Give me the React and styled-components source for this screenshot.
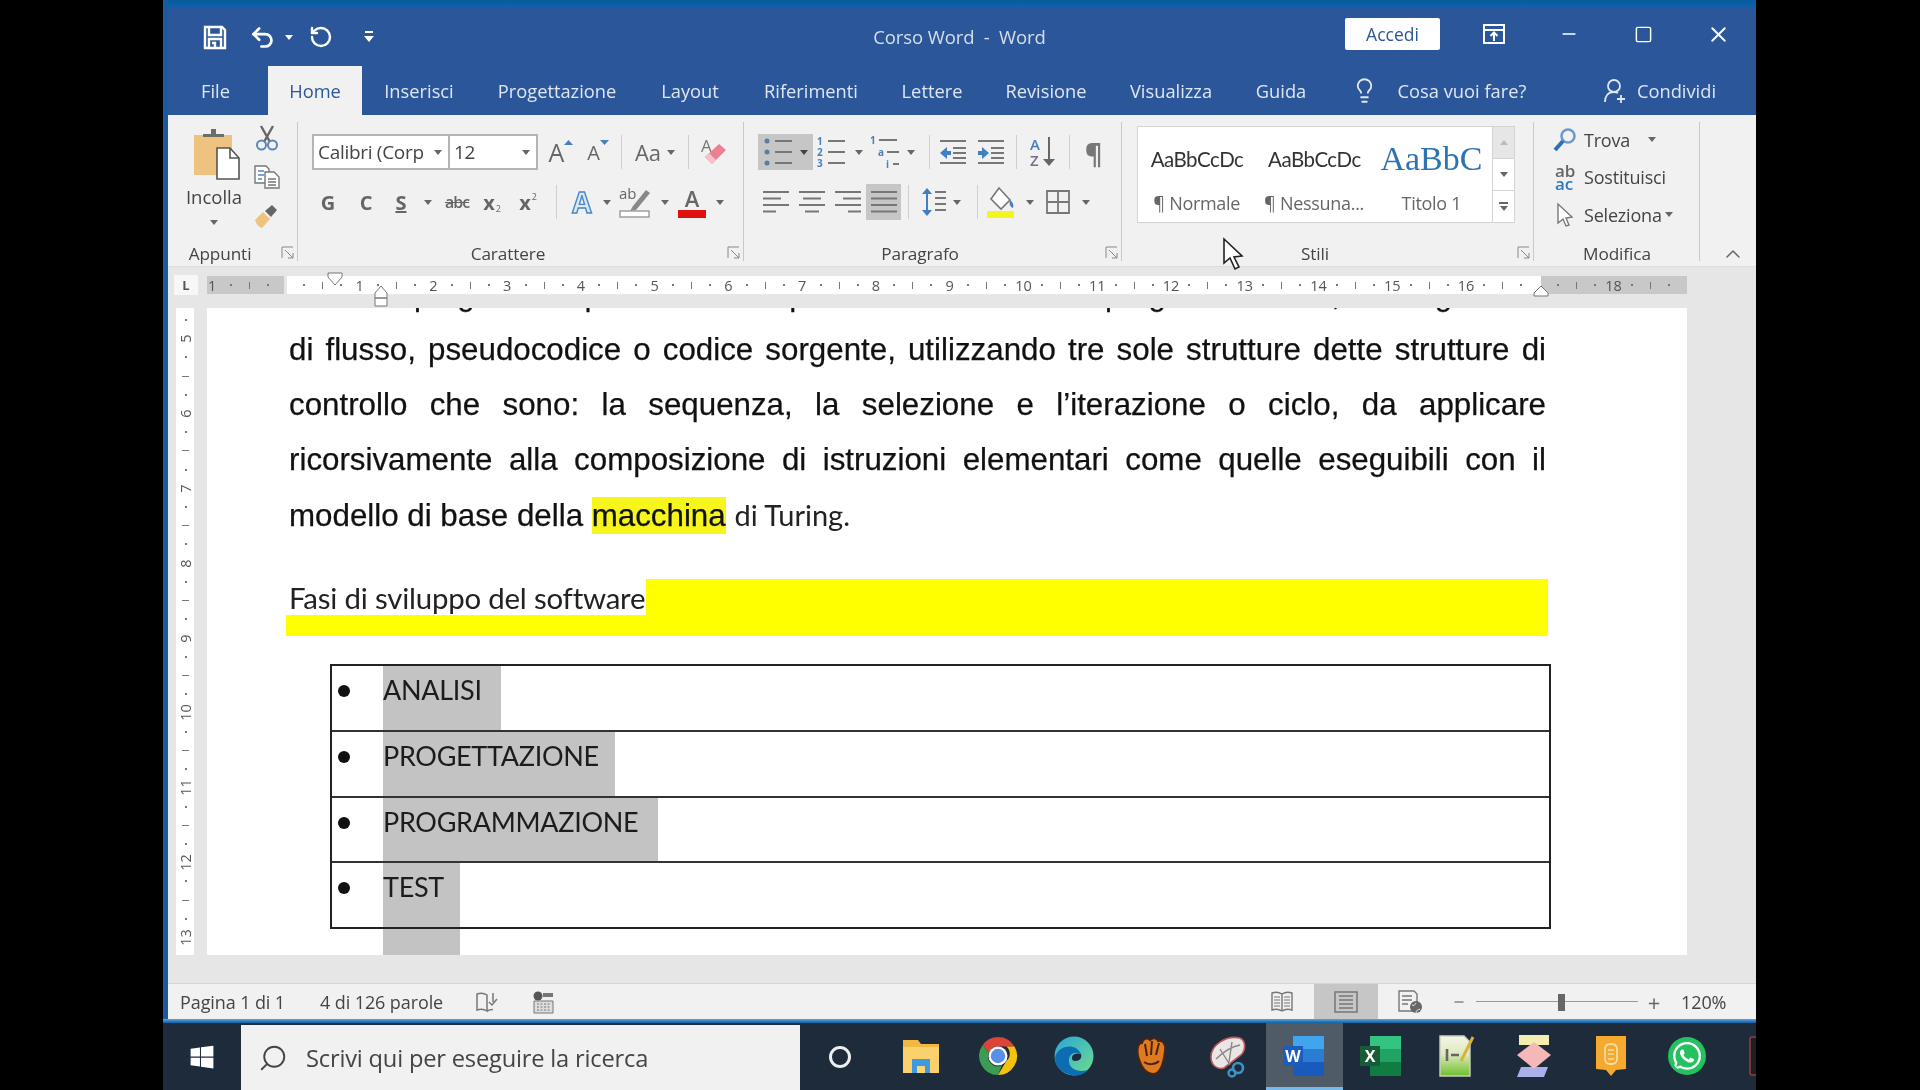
import React from 'react';
import styled, { createGlobalStyle } from 'styled-components';
import { Undo2, RotateCcw, Lightbulb, Search, Minus, Square, X, ChevronUp } from 'lucide-react';
import { FaWhatsapp, FaWindows } from 'react-icons/fa';

const ui = `"Open Sans", "Noto Sans", sans-serif`;
const calibri = `Lato, "Open Sans", sans-serif`;

const Global = createGlobalStyle`
  html, body { margin: 0; padding: 0; background: #000; }
  * { box-sizing: border-box; }
`;

const Desktop = styled.div`
  width: 1920px;
  height: 1090px;
  background: #000;
  padding-left: 163px;
  overflow: hidden;
  font-family: ${ui};
  filter: blur(0.6px);
`;

const Win = styled.div`
  width: 1593px;
  height: 1090px;
  display: flex;
  flex-direction: column;
  overflow: hidden;
`;

const Frame = styled.div`
  flex: 1;
  display: flex;
  flex-direction: column;
  border-left: 5px solid #1b5a9e;
  min-height: 0;
`;

const TopStrip = styled.div`
  height: 8px;
  background: linear-gradient(#0b5a9c, #0d62ad);
`;

const TitleBar = styled.div`
  height: 58px;
  background: #2b579a;
  display: grid;
  grid-template-columns: 1fr auto 1fr;
  align-items: center;
  color: #fff;
`;

const Qat = styled.div`
  display: flex;
  align-items: center;
  padding-left: 35px;
`;

const TitleText = styled.div`
  font-size: 18.5px;
  letter-spacing: -0.1px;
  color: #d5deea;
  white-space: pre;
  margin-left: -5px;
  margin-top: -2px;
`;

const WinControls = styled.div`
  display: flex;
  align-items: center;
  justify-content: flex-end;
  margin-top: -6px;
`;

const Accedi = styled.div`
  width: 95px;
  height: 32px;
  background: #fff;
  border-radius: 2px;
  color: #2b579a;
  font-size: 17.5px;
  display: flex;
  align-items: center;
  justify-content: center;
  margin-right: 16px;
`;

const Slot = styled.div`
  width: ${({ $w }) => $w}px;
  flex: none;
  height: 100%;
  display: flex;
  align-items: center;
  justify-content: center;
  color: ${({ $c }) => $c || '#666'};
  font-size: ${({ $s }) => $s || 18}px;
  font-weight: ${({ $b }) => ($b ? 700 : 400)};
  background: ${({ $on }) => ($on ? '#c6c6c6' : 'none')};
`;

const CtrlSlot = styled.div`
  width: 75px;
  height: 40px;
  display: flex;
  align-items: center;
  justify-content: center;
`;

const TabBar = styled.div`
  height: 49px;
  background: #2b579a;
  display: flex;
  align-items: stretch;
`;

const Tab = styled.div`
  width: ${({ $w }) => $w}px;
  flex: none;
  display: flex;
  align-items: center;
  justify-content: center;
  font-size: 18.3px;
  padding-right: ${({ $pr }) => $pr || 0}px;
  white-space: nowrap;
  color: ${({ $active }) => ($active ? '#2b579a' : '#dfe6f0')};
  background: ${({ $active }) => ($active ? '#f1f1f1' : 'none')};
`;

const Share = styled.div`
  margin-left: auto;
  display: flex;
  align-items: center;
  gap: 10px;
  color: #dfe6f0;
  font-size: 18.3px;
  padding-right: 40px;
`;

const Ribbon = styled.div`
  height: 152px;
  background: #f1f1f1;
  display: flex;
  position: relative;
  border-bottom: 1px solid #dcdcdc;
`;

const Group = styled.div`
  width: ${({ $w }) => $w}px;
  flex: none;
  display: flex;
  flex-direction: column;
  position: relative;
  &::after {
    content: '';
    position: absolute;
    right: 0;
    top: 7px;
    bottom: 5px;
    width: 1px;
    background: #c9c9c9;
  }
`;

const GroupBody = styled.div`
  height: 124px;
  display: flex;
  flex-direction: ${({ $col }) => ($col ? 'column' : 'row')};
  padding: ${({ $pad }) => $pad || '0'};
`;

const GroupFoot = styled.div`
  height: 28px;
  display: flex;
  align-items: center;
  padding: 2px 0 0 0;
`;

const GroupLabel = styled.div`
  flex: 1;
  text-align: center;
  font-size: 17.2px;
  letter-spacing: -0.1px;
  color: #444;
`;

const Launcher = styled.svg`
  width: 14px;
  height: 14px;
  margin: 0 3px 0 9px;
  flex: none;
`;

const PasteCol = styled.div`
  width: 82px;
  display: flex;
  flex-direction: column;
  align-items: center;
  padding-top: 13px;
`;

const PasteArt = styled.div`
  margin-left: 5px;
  height: 52px;
`;

const PasteLabel = styled.div`
  font-size: 18.5px;
  color: #444;
  margin: 5px 0 11px;
  line-height: 24px;
`;

const ClipCol = styled.div`
  width: 24px;
  display: flex;
  flex-direction: column;
  align-items: center;
  gap: 14px;
  padding-top: 10px;
`;

const ToolRow = styled.div`
  height: 36px;
  display: flex;
  align-items: center;
  margin-bottom: 14px;
`;

const Combo = styled.div`
  width: ${({ $w }) => $w}px;
  height: 36px;
  flex: none;
  background: #fff;
  border: 2px solid #b4b4b4;
  margin-left: ${({ $join }) => ($join ? '-2px' : '0')};
  display: flex;
  align-items: center;
  justify-content: space-between;
  padding: 0 6px 0 4px;
  font-size: 19px;
  letter-spacing: -0.3px;
  color: #444;
  white-space: nowrap;
`;

const Spacer = styled.div`
  width: ${({ $w }) => $w}px;
  flex: none;
`;

const VSep = styled.div`
  width: 1px;
  height: 34px;
  flex: none;
  background: #d0d0d0;
`;

const Drop = styled.span`
  display: inline-block;
  flex: none;
  width: 0;
  height: 0;
  border-left: 4px solid transparent;
  border-right: 4px solid transparent;
  border-top: 5px solid ${({ $c }) => $c || '#666'};
`;

const Under = styled.span`
  text-decoration: underline;
`;

const Strike = styled.span`
  text-decoration: line-through;
  letter-spacing: -1px;
  font-weight: 600;
`;

const Tiny = styled.span`
  font-size: 9px;
  font-weight: 400;
  align-self: ${({ $top }) => ($top ? 'flex-start' : 'flex-end')};
  margin: ${({ $top }) => ($top ? '6px 0 0 1px' : '0 0 5px 1px')};
`;

const EffectA = styled.span`
  font-size: 28px;
  line-height: 36px;
  font-weight: 700;
  color: #dbe9f7;
  -webkit-text-stroke: 1.4px #4a86c8;
`;

const ColorA = styled.div`
  height: 32px;
  width: 28px;
  display: flex;
  flex-direction: column;
  align-items: center;
  justify-content: flex-end;
  font-size: 22px;
  font-weight: 600;
  line-height: 24px;
  color: #666;
  &::after {
    content: '';
    width: 28px;
    height: 8px;
    flex: none;
    background: #e01010;
  }
`;

const Gallery = styled.div`
  width: 378px;
  height: 97px;
  margin: 11px 0 0 15px;
  background: #fff;
  border: 1px solid #d4d4d4;
  display: flex;
`;

const StyleItem = styled.div`
  width: 118px;
  display: flex;
  flex-direction: column;
  align-items: center;
`;

const StylePreview = styled.div`
  height: 63px;
  width: ${({ $title }) => ($title ? 110 : 96)}px;
  margin-left: ${({ $title }) => ($title ? 0 : 4)}px;
  overflow: hidden;
  display: flex;
  align-items: center;
  justify-content: ${({ $title }) => ($title ? 'center' : 'flex-start')};
  white-space: nowrap;
  font-family: ${({ $title }) => ($title ? `"Liberation Serif", serif` : calibri)};
  font-size: ${({ $title }) => ($title ? 34 : 20.5)}px;
  color: ${({ $title }) => ($title ? '#2e74b5' : '#333')};
  letter-spacing: ${({ $title }) => ($title ? '0' : '-0.5px')};
`;

const StyleName = styled.div`
  font-size: 18px;
  letter-spacing: -0.3px;
  color: #666;
  white-space: nowrap;
  line-height: 26px;
`;

const GalleryScroll = styled.div`
  width: 22px;
  margin-left: 2px;
  display: flex;
  flex-direction: column;
  border-left: 1px solid #d4d4d4;
`;

const ScrollBtn = styled.div`
  flex: 1;
  display: flex;
  align-items: center;
  justify-content: center;
  flex-direction: column;
  gap: 2px;
  background: ${({ $off }) => ($off ? '#e6e6e6' : '#fff')};
  border-bottom: 1px solid #d4d4d4;
  &:last-child { border-bottom: none; }
`;

const MoreBar = styled.i`
  width: 9px;
  height: 2px;
  background: #666;
  display: block;
`;

const EditRow = styled.div`
  height: 37.5px;
  display: flex;
  align-items: center;
  font-size: 18px;
  letter-spacing: -0.2px;
  color: #444;
  gap: 7px;
  white-space: nowrap;
`;

const EditIcon = styled.div`
  width: 24px;
  display: flex;
  justify-content: center;
  flex: none;
`;

const AbAc = styled.div`
  font-size: 17px;
  line-height: 13px;
  font-weight: 600;
  color: #666;
  span { color: #2f79c2; display: block; }
`;

const Collapse = styled.div`
  flex: 1;
  display: flex;
  align-items: flex-end;
  justify-content: center;
  padding: 0 0 0 10px;
  color: #666;
`;

const MouseCursor = styled.svg`
  position: absolute;
  left: 1054px;
  top: 122px;
`;

const RulerBar = styled.div`
  height: 41px;
  background: #e6e6e6;
  display: flex;
  padding: 8px 0 0 6px;
  flex: none;
`;

const TabBox = styled.div`
  width: 24px;
  height: 20px;
  background: #f7f7f7;
  margin-right: 9px;
  display: flex;
  align-items: center;
  justify-content: center;
  color: #555;
  font-size: 13px;
  font-weight: 700;
`;

const Strip = styled.div`
  width: 1480px;
  height: 18px;
  margin-top: 1px;
  position: relative;
  display: flex;
  background: linear-gradient(
    to right,
    #c8c8c8 77px,
    #e6e6e6 77px 80px,
    #fff 80px 1334px,
    #c8c8c8 1334px
  );
`;

const StripCells = styled.div`
  display: flex;
  margin-left: -4px;
`;

const HCell = styled.div`
  width: 18.45px;
  flex: none;
  display: flex;
  align-items: center;
  justify-content: center;
  font-size: 14.5px;
  color: #555;
  white-space: nowrap;
`;

const Dot = styled.i`
  width: 2px;
  height: 2px;
  background: #777;
  display: block;
`;

const HTick = styled.i`
  width: 1px;
  height: 7px;
  background: #777;
  display: block;
`;

const Marker = styled.svg`
  position: absolute;
  left: ${({ $x }) => $x}px;
  top: ${({ $y }) => $y}px;
`;

const DocArea = styled.div`
  height: 675px;
  flex: none;
  background: #e6e6e6;
  display: flex;
  align-items: flex-start;
`;

const VRuler = styled.div`
  width: 18px;
  height: 647px;
  margin: 0 13px 0 8px;
  background: #fff;
  overflow: hidden;
  flex: none;
  padding: 2.5px 0 0 1px;
`;

const VCell = styled.div`
  height: 18.72px;
  display: flex;
  align-items: center;
  justify-content: center;
  font-size: 14.5px;
  color: #555;
  span { transform: rotate(-90deg); white-space: nowrap; }
`;

const VTick = styled.i`
  width: 7px;
  height: 1px;
  background: #777;
  display: block;
`;

const Page = styled.div`
  width: 1480px;
  height: 647px;
  flex: none;
  background: #fff;
  overflow: hidden;
  padding: 0 141px 0 82px;
`;

const Line = styled.div`
  height: 55px;
  line-height: 55px;
  font-family: "Liberation Sans", Arial, sans-serif;
  font-size: 31.3px;
  -webkit-text-stroke: 0.25px #111;
  color: #111;
  text-align: justify;
  text-align-last: ${({ $last }) => ($last ? 'left' : 'justify')};
  white-space: ${({ $last }) => ($last ? 'nowrap' : 'normal')};
  overflow: hidden;
  &:first-child { margin-top: -41.5px; letter-spacing: -0.6px; }
`;

const Mark = styled.span`
  background: #f6f61c;
  padding: 1px 0;
`;

const CalibriRun = styled.span`
  font-family: ${calibri};
  font-size: 29px;
  -webkit-text-stroke: 0;
  color: #222;
`;

const SectionBand = styled.div`
  height: 57px;
  width: 1262px;
  margin: 37.5px 0 28px -3px;
  background: #ffff00;
`;

const SectionText = styled.span`
  display: inline-block;
  height: 36px;
  line-height: 38px;
  width: 360px;
  padding-left: 3px;
  background: #fff;
  font-family: ${calibri};
  font-size: 29.4px;
  letter-spacing: -0.2px;
  color: #222;
  white-space: nowrap;
`;

const Table = styled.div`
  width: 1221px;
  margin-left: 41px;
  border: 2px solid #222;
`;

const Row = styled.div`
  height: 65.75px;
  display: flex;
  border-bottom: 2px solid #333;
  &:last-child { border-bottom: none; height: 64px; }
`;

const BulletCell = styled.div`
  width: 51px;
  flex: none;
  display: flex;
  justify-content: flex-start;
  padding: 19px 0 0 6px;
  &::before {
    content: '';
    width: 12px;
    height: 12px;
    border-radius: 50%;
    background: #111;
  }
`;

const ShadeCell = styled.div`
  width: ${({ $w }) => $w}px;
  background: #c3c3c3;
  font-family: ${calibri};
  font-size: 27px;
  letter-spacing: -0.3px;
  color: #1c1c1c;
  line-height: 48px;
  white-space: nowrap;
`;

const ShadeTail = styled.div`
  width: 77px;
  height: 30px;
  margin-left: 94px;
  background: #c3c3c3;
`;

const StatusBar = styled.div`
  height: 36px;
  flex: none;
  background: #f1f1f1;
  border-top: 1px solid #d6d6d6;
  display: flex;
  align-items: stretch;
  color: #444;
  font-size: 18px;
  letter-spacing: -0.1px;
`;

const StatusText = styled.div`
  display: flex;
  align-items: center;
  width: ${({ $w }) => $w}px;
  flex: none;
  white-space: nowrap;
`;

const ZoomTrack = styled.div`
  width: 162px;
  flex: none;
  position: relative;
  display: flex;
  align-items: center;
  &::before {
    content: '';
    width: 100%;
    height: 1px;
    background: #999;
  }
`;

const ZoomThumb = styled.div`
  position: absolute;
  left: 82px;
  top: 10px;
  width: 7px;
  height: 17px;
  background: #666;
`;

const BlueLine = styled.div`
  height: 4px;
  flex: none;
  background: linear-gradient(#5da3e0, #0d5fa8);
`;

const Taskbar = styled.div`
  height: 67px;
  flex: none;
  background: #1d2b3a;
  display: flex;
  align-items: stretch;
`;

const StartBtn = styled.div`
  width: 78px;
  flex: none;
  display: flex;
  align-items: center;
  justify-content: center;
  color: #fff;
  font-size: 26px;
`;

const SearchBox = styled.div`
  width: 559px;
  flex: none;
  margin-top: 2px;
  background: #f1f1f1;
  display: flex;
  align-items: center;
  gap: 18px;
  padding-left: 17px;
  color: #444;
  font-size: 23.7px;
  letter-spacing: -0.2px;
  white-space: nowrap;
`;

const CortanaSlot = styled.div`
  width: 83px;
  flex: none;
  display: flex;
  align-items: center;
  justify-content: center;
  padding-right: 3px;
`;

const Ring = styled.div`
  width: 22px;
  height: 22px;
  border: 3px solid #eee;
  border-radius: 50%;
`;

const AppSlot = styled.div`
  width: 76.6px;
  flex: none;
  display: flex;
  align-items: center;
  justify-content: center;
  background: ${({ $on }) => ($on ? '#4f5b67' : 'none')};
  border-bottom: ${({ $on }) => ($on ? '3px solid #76b9ed' : '3px solid transparent')};
  padding-top: 2px;
`;

const Svg = ({ w = 24, h = 24, vb, children, style, ...rest }) => (
  <svg width={w} height={h} viewBox={vb || `0 0 ${w} ${h}`} fill="none" style={{ overflow: 'visible', ...style }} {...rest}>
    {children}
  </svg>
);

const SaveIcon = () => (
  <Svg w={24} h={26} stroke="#fff" strokeWidth="2.4">
    <path d="M2 3h17l3 3v18H2z" />
    <path d="M6 3v8h12V3M6 24v-9h12v9" />
    <path d="M9 19h3v5" />
  </Svg>
);

const CustomizeIcon = () => (
  <Svg w={10} h={14}>
    <path d="M1 2h8" stroke="#fff" strokeWidth="2" />
    <path d="M0 6h10l-5 6z" fill="#fff" />
  </Svg>
);

const RibbonDisplayIcon = () => (
  <Svg w={24} h={22} stroke="#fff" strokeWidth="2">
    <path d="M2 2h20v18H2zM2 7h20" />
    <path d="M12 18v-8M8.5 13l3.5-3.5 3.5 3.5" />
  </Svg>
);

const PersonIcon = () => (
  <Svg w={24} h={26} stroke="#dfe6f0" strokeWidth="1.8">
    <circle cx="11" cy="8" r="6" />
    <path d="M2 24c0-6 3-10 9-10 2 0 3 .5 4 1M18 17v8M14 21h8" />
  </Svg>
);

const PasteIcon = () => (
  <Svg w={48} h={52}>
    <rect x="1" y="7" width="38" height="40" fill="#eec27f" />
    <path d="M10 9V6h8V1h5v5h8v3z" fill="#6d6d6d" />
    <path d="M24 20h13l9 10v21H24z" fill="#fff" stroke="#555" strokeWidth="1.6" />
    <path d="M37 20v10h9" stroke="#555" strokeWidth="1.6" />
  </Svg>
);

const CutIcon = () => (
  <Svg w={24} h={26}>
    <path d="M6 1l9 16M18 1L9 17" stroke="#666" strokeWidth="2.4" />
    <circle cx="6.5" cy="20" r="4.5" stroke="#5f86b3" strokeWidth="2" />
    <circle cx="17.5" cy="20" r="4.5" stroke="#5f86b3" strokeWidth="2" />
  </Svg>
);

const CopyIcon = () => (
  <Svg w={26} h={24} stroke="#777" strokeWidth="1.4" fill="#fff">
    <path d="M1 1h11l3 3v14H1z" />
    <path d="M11 7h9l5 5v11H11z" />
    <path d="M4 6h6M4 10h6M4 14h4" stroke="#4d84c4" />
    <path d="M14 14h8M14 17h8M14 20h8" />
  </Svg>
);

const PainterIcon = () => (
  <Svg w={26} h={26}>
    <path d="M1 17l8-8 7 7-8 9c-3-1-6-4-7-8z" fill="#eec27f" />
    <path d="M11 8l7-6 5 5-6 7z" fill="#666" />
  </Svg>
);

const GrowIcon = ({ up, size }) => (
  <>
    <span style={{ fontSize: size }}>A</span>
    <Svg w={9} h={14} style={{ alignSelf: 'flex-start', marginTop: 5 }}>
      <path d={up ? 'M0 6l4.5-5L9 6z' : 'M0 1h9L4.5 6z'} fill="#4a7fbd" />
    </Svg>
  </>
);

const EraserIcon = () => (
  <Svg w={28} h={30}>
    <text x="1" y="15" fontFamily="Open Sans" fontSize="17" fill="#777">A</text>
    <path d="M5 20L19 7l7 6-14 14z" fill="#ec7f92" />
    <path d="M5 20l4-4 7 7-4 4z" fill="#f5c2ca" />
  </Svg>
);

const HighlightIcon = () => (
  <Svg w={34} h={32}>
    <text x="0" y="13" fontFamily="Open Sans" fontSize="15" fill="#666">ab</text>
    <path d="M14 20L27 4l4 3-14 17-6 1z" fill="#888" />
    <rect x="1" y="25" width="29" height="6" fill="#fff" stroke="#999" strokeWidth="1.4" />
  </Svg>
);

const ListIcon = ({ kind }) => (
  <Svg w={32} h={32}>
    {[5, 16, 27].map((y, i) => (
      <g key={y}>
        {kind === 'num'
          ? <text x="1" y={y + 4} fontFamily="Open Sans" fontSize="10" fontWeight="700" fill="#4a7fbd">{i + 1}</text>
          : <circle cx="4" cy={y} r="2.5" fill="#5b7ba6" />}
        <path d={`M12 ${y}h17`} stroke="#777" strokeWidth="2" />
      </g>
    ))}
  </Svg>
);

const MultiIcon = () => (
  <Svg w={36} h={34}>
    <text x="1" y="9" fontFamily="Open Sans" fontSize="10" fontWeight="700" fill="#4a7fbd">1</text>
    <path d="M10 5h18" stroke="#777" strokeWidth="2" />
    <text x="9" y="21" fontFamily="Open Sans" fontSize="10" fontWeight="700" fill="#4a7fbd">a</text>
    <path d="M18 17h12" stroke="#777" strokeWidth="2" />
    <text x="17" y="33" fontFamily="Open Sans" fontSize="10" fontWeight="700" fill="#4a7fbd">i</text>
    <path d="M24 29h6" stroke="#777" strokeWidth="2" />
  </Svg>
);

const IndentIcon = ({ out }) => (
  <Svg w={28} h={26}>
    <path d="M1 2h26M14 9h13M14 14h13M14 19h13M1 24h26" stroke="#777" strokeWidth="2" />
    <path d={out ? 'M1 14l7-6v4h4v4H8v4z' : 'M12 14l-7-6v4H1v4h4v4z'} fill="#3f7fc4" />
  </Svg>
);

const SortIcon = () => (
  <Svg w={28} h={32}>
    <text x="1" y="14" fontFamily="Open Sans" fontSize="15" fontWeight="600" fill="#4a7fbd">A</text>
    <text x="1" y="30" fontFamily="Open Sans" fontSize="15" fontWeight="600" fill="#7b6a8a">Z</text>
    <path d="M20 1v26" stroke="#666" strokeWidth="2" />
    <path d="M14 23h12l-6 7z" fill="#666" />
  </Svg>
);

const AlignIcon = ({ mode }) => {
  const rows = {
    left: [[0, 26], [0, 18], [0, 26], [0, 13]],
    center: [[0, 26], [4, 18], [0, 26], [6, 14]],
    right: [[0, 26], [8, 18], [0, 26], [13, 13]],
    justify: [[0, 26], [0, 26], [0, 26], [0, 26]],
  }[mode];
  return (
    <Svg w={26} h={26}>
      {rows.map(([x, l], i) => (
        <path key={i} d={`M${x} ${3 + i * 6.5}h${l}`} stroke="#777" strokeWidth="2" />
      ))}
    </Svg>
  );
};

const SpacingIcon = () => (
  <Svg w={26} h={32}>
    <path d="M6 3v26" stroke="#3f7fc4" strokeWidth="2" />
    <path d="M1 8l5-6 5 6zM1 24l5 6 5-6z" fill="#3f7fc4" />
    <path d="M14 6h11M14 12h11M14 18h11M14 24h11" stroke="#777" strokeWidth="2" />
  </Svg>
);

const ShadeIcon = () => (
  <Svg w={30} h={34}>
    <path d="M13 3l11 12-9 9L5 14z" fill="#fff" stroke="#777" strokeWidth="1.6" />
    <path d="M24 15c3 2 4 5 3 8-3-1-4-4-3-8z" fill="#4a7fbd" />
    <rect x="1" y="26" width="27" height="7" fill="#f5f51e" />
  </Svg>
);

const BorderIcon = () => (
  <Svg w={24} h={24}>
    <path d="M1 1h22v22H1zM12 1v22M1 12h22" stroke="#777" strokeWidth="1.8" />
  </Svg>
);

const FindIcon = () => (
  <Svg w={24} h={26}>
    <circle cx="15" cy="9" r="6.5" stroke="#6b9bd0" strokeWidth="2.6" />
    <path d="M10 14L2 23" stroke="#2f6fb5" strokeWidth="4" />
  </Svg>
);

const SelectIcon = () => (
  <Svg w={16} h={24}>
    <path d="M1 1v19l5-4 3 7 3-1-3-7 6-1z" fill="#fff" stroke="#777" strokeWidth="1.4" />
  </Svg>
);

const BookCheckIcon = () => (
  <Svg w={22} h={22} stroke="#777" strokeWidth="1.5">
    <path d="M11 4C8 2 4 2 1 3v16c3-1 7-1 10 1V4zM11 20c2-1.2 4-1.6 6-1.6M17 2v9" />
    <path d="M13 11l3 3 5-6" />
  </Svg>
);

const MacroIcon = () => (
  <Svg w={22} h={24}>
    <circle cx="6" cy="6" r="4.5" fill="#555" />
    <path d="M11 3h10v4H11z" fill="#777" />
    <path d="M2 11h19v12H2z" fill="#ddd" stroke="#777" />
    <path d="M5 14h13M5 17h13M5 20h13" stroke="#777" strokeDasharray="2 1.5" />
  </Svg>
);

const ReadIcon = () => (
  <Svg w={24} h={24} stroke="#777" strokeWidth="1.4">
    <path d="M12 4C9 2 5 2 2 3v17c3-1 7-1 10 1 3-2 7-2 10-1V3c-3-1-7-1-10 1zM12 4v17" />
    <path d="M4 7h6M4 10h6M4 13h6M4 16h6M14 7h6M14 10h6M14 13h6M14 16h6" strokeWidth="1.2" />
  </Svg>
);

const PrintIcon = () => (
  <Svg w={24} h={24} stroke="#777" strokeWidth="1.5">
    <path d="M1 2h22v20H1z" />
    <path d="M5 6h14M5 10h14M5 14h14M5 18h14" strokeWidth="1.3" />
  </Svg>
);

const WebIcon = () => (
  <Svg w={26} h={24}>
    <path d="M2 1h15l3 3v17H2z" stroke="#777" strokeWidth="1.4" />
    <path d="M5 6h10M5 10h10M5 14h6" stroke="#777" strokeWidth="1.3" />
    <circle cx="19" cy="17" r="6" fill="#666" />
    <path d="M15 15c2 1 3 0 4-2M19 23c0-3 2-3 4-4" stroke="#f1f1f1" />
  </Svg>
);

const ExplorerIcon = () => (
  <Svg w={38} h={38}>
    <path d="M1 3h15l3 4h18v29H1z" fill="#f1b93f" />
    <path d="M1 10h36v26H1z" fill="#fad16a" />
    <path d="M10 22h18v14H10z" fill="#3d9ae0" />
    <path d="M15 29h8v7h-8z" fill="#f7d66f" />
  </Svg>
);

const ChromeIcon = () => (
  <Svg w={38} h={38}>
    <path d="M19 0a19 19 0 0 1 16.5 9.5H19a9.5 9.5 0 0 0-9 6.5L3.7 8A19 19 0 0 1 19 0z" fill="#db4437" />
    <path d="M35.5 9.5A19 19 0 0 1 19 38l8.4-14a9.5 9.5 0 0 0 0-14.5z" fill="#f4c20d" />
    <path d="M3.7 8L10 16a9.5 9.5 0 0 0 13 12.3L19 38A19 19 0 0 1 3.7 8z" fill="#3c9c51" />
    <circle cx="19" cy="19" r="9.5" fill="#fff" />
    <circle cx="19" cy="19" r="7.2" fill="#5a8fe6" />
  </Svg>
);

const EdgeIcon = () => (
  <Svg w={40} h={40}>
    <defs>
      <linearGradient id="edgeFill" x1="0" y1="0" x2="1" y2="1">
        <stop offset="0" stopColor="#2aa6d8" />
        <stop offset="1" stopColor="#6fdc8c" />
      </linearGradient>
    </defs>
    <circle cx="20" cy="20" r="19.5" fill="url(#edgeFill)" />
    <path d="M1 22C3 9 22 6 27 18c-6-3-13 0-12 8 1 7 9 11 19 8-6 6-12 6-17 5C8 37 1 31 1 22z" fill="#0d6db3" />
    <path d="M27 18c-2-1-9-1-9 4 0 2 1 3 3 3 5 0 7-3 6-7z" fill="#1d2b3a" />
  </Svg>
);

const GloveIcon = () => (
  <Svg w={36} h={42}>
    <path d="M7 27C3 18 4 8 9 8c1-4 5-6 8-3 3-3 7-2 8 1 5-1 8 3 7 10-1 9-3 18-8 22-6 3-13-1-17-11z" fill="#e07a1f" stroke="#4a2410" strokeWidth="2" />
    <path d="M12 9l2 12M19 6l-1 14M26 8l-3 12M11 27c4 3 11 3 15-1" stroke="#4a2410" strokeWidth="2" />
  </Svg>
);

const SnipIcon = () => (
  <Svg w={40} h={42}>
    <path d="M3 22C3 10 18 0 32 3c6 3 6 12 1 17L16 33C9 35 3 30 3 22z" fill="#ebe6e6" stroke="#b85a5a" strokeWidth="1.6" />
    <path d="M12 14l10 16M24 7l-3 20M8 24c6-6 14-12 24-14" stroke="#888" strokeWidth="1.4" />
    <circle cx="30" cy="33" r="5" stroke="#3f92c9" strokeWidth="2.6" />
    <circle cx="24" cy="38" r="3.5" stroke="#3f92c9" strokeWidth="2.4" />
  </Svg>
);

const OfficeIcon = ({ light, mid, dark, box, letter }) => (
  <Svg w={42} h={40}>
    <rect x="10" y="0" width="31" height="13" fill={light} />
    <rect x="10" y="13" width="31" height="13" fill={mid} />
    <rect x="10" y="26" width="31" height="14" fill={dark} />
    <rect x="0" y="10" width="20" height="20" fill={box} />
    <text x="10" y="26" textAnchor="middle" fontFamily="Open Sans" fontWeight="700" fontSize="16" fill="#fff">{letter}</text>
  </Svg>
);

const NoteIcon = () => (
  <Svg w={36} h={42}>
    <defs>
      <linearGradient id="noteFill" x1="0" y1="0" x2="0" y2="1">
        <stop offset="0" stopColor="#f5f5e6" />
        <stop offset="0.45" stopColor="#dfe9bf" />
        <stop offset="1" stopColor="#6cc02a" />
      </linearGradient>
    </defs>
    <path d="M1 1h24l6 6v34H1z" fill="url(#noteFill)" stroke="#c9d0c0" strokeWidth="1.4" />
    <path d="M8 14v12M12 20h8" stroke="#666" strokeWidth="2.6" />
    <path d="M34 2L22 26" stroke="#d9b23a" strokeWidth="3" />
  </Svg>
);

const LayersIcon = () => (
  <Svg w={36} h={42}>
    <rect x="3" y="0" width="30" height="10" fill="#f3eeb0" />
    <path d="M5 32h27l-4 10H1z" fill="#aab0ea" />
    <path d="M18 7l17 13-17 14L1 20z" fill="#f5b8b8" />
  </Svg>
);

const HexBIcon = () => (
  <Svg w={34} h={42}>
    <path d="M2 1h30v33l-10 1-5 6-5-6-10-1z" fill="#f6a92f" />
    <rect x="11" y="9" width="12" height="20" rx="5" stroke="#f9dca8" strokeWidth="1.8" />
    <path d="M14 15h6M14 19h6M14 24h6" stroke="#f9dca8" strokeWidth="1.4" />
  </Svg>
);

const WhatsappIcon = () => (
  <FaWhatsapp size={38} color="#fff" style={{ background: '#25c160', borderRadius: '50%', padding: 3 }} />
);

const LastIcon = () => (
  <Svg w={36} h={40} style={{ marginLeft: 6 }}>
    <rect x="1" y="1" width="34" height="38" rx="2" fill="#221d22" stroke="#8a4040" strokeWidth="1.6" />
  </Svg>
);

const TABS = [
  ['File', 100, 5], ['Home', 94], ['Inserisci', 114], ['Progettazione', 162], ['Layout', 104],
  ['Riferimenti', 138], ['Lettere', 104], ['Revisione', 124], ['Visualizza', 126], ['Guida', 94],
];

const RULER_CELLS = Array.from({ length: 80 }, (_, k) => {
  if (k === 0) return '1';
  if (k === 4 || k === 72) return '';
  if (k % 4 === 0) return String(k / 4 - 1);
  return k % 4 === 2 ? 'tick' : 'dot';
});

const VRULER_CELLS = Array.from({ length: 37 }, (_, k) => {
  if (k % 4 === 1) return String(5 + (k - 1) / 4);
  return k % 4 === 3 ? 'tick' : 'dot';
});

const rulerCell = c => (c === 'tick' ? <HTick /> : c === 'dot' ? <Dot /> : c);

const ROWS = [['ANALISI', 118], ['PROGETTAZIONE', 232], ['PROGRAMMAZIONE', 275], ['TEST', 77]];

const launcher = (
  <Launcher viewBox="0 0 14 14" fill="none" stroke="#888">
    <path d="M1 1h11M1 1v11M4 4l8 8M12 7v5H7" />
  </Launcher>
);

export default function App() {
  return (
    <Desktop>
      <Global />
      <Win>
        <Frame>
          <TopStrip />
          <TitleBar>
            <Qat>
              <Slot $w={24}><SaveIcon /></Slot>
              <Spacer $w={22} />
              <Undo2 size={27} color="#fff" strokeWidth={2.4} />
              <Slot $w={25}><Drop $c="#fff" /></Slot>
              <Spacer $w={8} />
              <RotateCcw size={24} color="#fff" strokeWidth={2.4} />
              <Spacer $w={31} />
              <CustomizeIcon />
            </Qat>
            <TitleText>Corso Word  -  Word</TitleText>
            <WinControls>
              <Accedi>Accedi</Accedi>
              <CtrlSlot><RibbonDisplayIcon /></CtrlSlot>
              <CtrlSlot><Minus size={20} color="#fff" /></CtrlSlot>
              <CtrlSlot><Square size={19} color="#fff" strokeWidth={1.8} /></CtrlSlot>
              <CtrlSlot><X size={25} color="#fff" strokeWidth={1.8} /></CtrlSlot>
            </WinControls>
          </TitleBar>

          <TabBar>
            {TABS.map(([name, w, pr]) => (
              <Tab key={name} $w={w} $pr={pr} $active={name === 'Home'}>{name}</Tab>
            ))}
            <Slot $w={72}><Lightbulb size={27} color="#dfe6f0" strokeWidth={1.6} /></Slot>
            <Tab $w={124}>Cosa vuoi fare?</Tab>
            <Share><PersonIcon />Condividi</Share>
          </TabBar>

          <Ribbon>
            <Group $w={130}>
              <GroupBody $pad="0 0 0 5px">
                <PasteCol>
                  <PasteArt><PasteIcon /></PasteArt>
                  <PasteLabel>Incolla</PasteLabel>
                  <Drop />
                </PasteCol>
                <ClipCol>
                  <CutIcon />
                  <CopyIcon />
                  <PainterIcon />
                </ClipCol>
              </GroupBody>
              <GroupFoot>
                <GroupLabel>Appunti</GroupLabel>
                {launcher}
              </GroupFoot>
            </Group>

            <Group $w={446}>
              <GroupBody $col $pad="19px 0 0 14px">
                <ToolRow>
                  <Combo $w={138}>Calibri (Corp <Drop /></Combo>
                  <Combo $w={90} $join>12 <Drop /></Combo>
                  <Spacer $w={4} />
                  <Slot $w={38} $c="#666"><GrowIcon up size={25} /></Slot>
                  <Slot $w={36} $c="#666"><GrowIcon size={20} /></Slot>
                  <Spacer $w={5} />
                  <VSep />
                  <Slot $w={66} $s={22} $c="#666" style={{ gap: 6 }}>Aa <Drop /></Slot>
                  <VSep />
                  <Slot $w={50}><EraserIcon /></Slot>
                </ToolRow>
                <ToolRow>
                  <Slot $w={32} $b $s={20}>G</Slot>
                  <Slot $w={44} $b $s={20}>C</Slot>
                  <Slot $w={26} $b $s={20}><Under>S</Under></Slot>
                  <Slot $w={28}><Drop /></Slot>
                  <Slot $w={30} $s={16}><Strike>abc</Strike></Slot>
                  <Slot $w={40} $b $s={20}>x<Tiny>2</Tiny></Slot>
                  <Slot $w={32} $b $s={20}>x<Tiny $top>2</Tiny></Slot>
                  <Spacer $w={12} />
                  <VSep />
                  <Spacer $w={4} />
                  <Slot $w={42}><EffectA>A</EffectA></Slot>
                  <Slot $w={8}><Drop /></Slot>
                  <Slot $w={50}><HighlightIcon /></Slot>
                  <Slot $w={8}><Drop /></Slot>
                  <Slot $w={46}><ColorA>A</ColorA></Slot>
                  <Slot $w={10}><Drop /></Slot>
                </ToolRow>
              </GroupBody>
              <GroupFoot>
                <GroupLabel>Carattere</GroupLabel>
                {launcher}
              </GroupFoot>
            </Group>

            <Group $w={378}>
              <GroupBody $col $pad="19px 0 0 14px">
                <ToolRow>
                  <Slot $w={55} $on style={{ gap: 5 }}><ListIcon /><Drop $c="#444" /></Slot>
                  <Slot $w={37}><ListIcon kind="num" /></Slot>
                  <Slot $w={18}><Drop /></Slot>
                  <Slot $w={38}><MultiIcon /></Slot>
                  <Slot $w={10}><Drop /></Slot>
                  <Spacer $w={13} />
                  <VSep />
                  <Slot $w={46}><IndentIcon out /></Slot>
                  <Slot $w={30}><IndentIcon /></Slot>
                  <Spacer $w={10} />
                  <VSep />
                  <Slot $w={52}><SortIcon /></Slot>
                  <VSep />
                  <Slot $w={47} $s={27} $b $c="#777">¶</Slot>
                </ToolRow>
                <ToolRow>
                  <Slot $w={36}><AlignIcon mode="left" /></Slot>
                  <Slot $w={36}><AlignIcon mode="center" /></Slot>
                  <Slot $w={36}><AlignIcon mode="right" /></Slot>
                  <Slot $w={35} $on><AlignIcon mode="justify" /></Slot>
                  <Spacer $w={7} />
                  <VSep />
                  <Spacer $w={8} />
                  <Slot $w={34}><SpacingIcon /></Slot>
                  <Slot $w={12}><Drop /></Slot>
                  <Spacer $w={14} />
                  <VSep />
                  <Slot $w={46}><ShadeIcon /></Slot>
                  <Slot $w={12}><Drop /></Slot>
                  <Slot $w={44}><BorderIcon /></Slot>
                  <Slot $w={12}><Drop /></Slot>
                </ToolRow>
              </GroupBody>
              <GroupFoot>
                <GroupLabel>Paragrafo</GroupLabel>
                {launcher}
              </GroupFoot>
            </Group>

            <Group $w={412}>
              <GroupBody>
                <Gallery>
                  <StyleItem>
                    <StylePreview>AaBbCcDc</StylePreview>
                    <StyleName>¶ Normale</StyleName>
                  </StyleItem>
                  <StyleItem>
                    <StylePreview>AaBbCcDc</StylePreview>
                    <StyleName>¶ Nessuna...</StyleName>
                  </StyleItem>
                  <StyleItem>
                    <StylePreview $title>AaBbC</StylePreview>
                    <StyleName>Titolo 1</StyleName>
                  </StyleItem>
                  <GalleryScroll>
                    <ScrollBtn $off><Drop style={{ transform: 'rotate(180deg)' }} $c="#bbb" /></ScrollBtn>
                    <ScrollBtn><Drop /></ScrollBtn>
                    <ScrollBtn><MoreBar /><Drop /></ScrollBtn>
                  </GalleryScroll>
                </Gallery>
              </GroupBody>
              <GroupFoot>
                <GroupLabel>Stili</GroupLabel>
                {launcher}
              </GroupFoot>
            </Group>

            <Group $w={166}>
              <GroupBody $col $pad="6px 0 0 19px">
                <EditRow><EditIcon><FindIcon /></EditIcon>Trova <Spacer $w={4} /><Drop /></EditRow>
                <EditRow>
                  <EditIcon><AbAc>ab<span>ac</span></AbAc></EditIcon>
                  Sostituisci
                </EditRow>
                <EditRow><EditIcon><SelectIcon /></EditIcon>Seleziona<Drop style={{ marginLeft: -4 }} /></EditRow>
              </GroupBody>
              <GroupFoot>
                <GroupLabel>Modifica</GroupLabel>
              </GroupFoot>
            </Group>

            <Collapse><ChevronUp size={24} strokeWidth={1.5} /></Collapse>

            <MouseCursor width="26" height="34" viewBox="0 0 26 34">
              <path d="M2 2v24l6-5 5 11 4-2-5-10 8-1z" fill="#fff" stroke="#222" strokeWidth="1.6" />
            </MouseCursor>
          </Ribbon>

          <RulerBar>
            <TabBox>L</TabBox>
            <Strip>
              <StripCells>
                {RULER_CELLS.map((c, i) => <HCell key={i}>{rulerCell(c)}</HCell>)}
              </StripCells>
              <Marker $x={120} $y={-4} width="16" height="14" viewBox="0 0 16 14">
                <path d="M1 1h14v4l-7 8-7-8z" fill="#fff" stroke="#777" />
              </Marker>
              <Marker $x={167} $y={9} width="14" height="22" viewBox="0 0 14 22">
                <path d="M7 1l6 7v5H1V8zM1 13h12v8H1z" fill="#fff" stroke="#777" />
              </Marker>
              <Marker $x={1326} $y={9} width="16" height="12" viewBox="0 0 16 12">
                <path d="M8 1l7 7v3H1V8z" fill="#fff" stroke="#777" />
              </Marker>
            </Strip>
          </RulerBar>

          <DocArea>
            <VRuler>
              {VRULER_CELLS.map((c, i) => (
                <VCell key={i}>
                  {c === 'tick' ? <VTick /> : c === 'dot' ? <Dot /> : <span>{c}</span>}
                </VCell>
              ))}
            </VRuler>
            <Page>
              <Line>Ciascun programma può essere implementato in fase di programmazione, in diagramma</Line>
              <Line>di flusso, pseudocodice o codice sorgente, utilizzando tre sole strutture dette strutture di</Line>
              <Line>controllo che sono: la sequenza, la selezione e l’iterazione o ciclo, da applicare</Line>
              <Line>ricorsivamente alla composizione di istruzioni elementari come quelle eseguibili con il</Line>
              <Line $last>modello di base della <Mark>macchina</Mark> <CalibriRun>di Turing.</CalibriRun></Line>
              <SectionBand><SectionText>Fasi di sviluppo del software</SectionText></SectionBand>
              <Table>
                {ROWS.map(([t, w]) => (
                  <Row key={t}>
                    <BulletCell />
                    <ShadeCell $w={w}>{t}</ShadeCell>
                  </Row>
                ))}
              </Table>
              <ShadeTail />
            </Page>
          </DocArea>

          <StatusBar>
            <Spacer $w={12} />
            <StatusText $w={140}>Pagina 1 di 1</StatusText>
            <StatusText $w={145}>4 di 126 parole</StatusText>
            <Slot $w={44}><BookCheckIcon /></Slot>
            <Spacer $w={12} />
            <Slot $w={44}><MacroIcon /></Slot>
            <Spacer $w={685} />
            <Slot $w={64}><ReadIcon /></Slot>
            <Slot $w={64} $on><PrintIcon /></Slot>
            <Slot $w={64}><WebIcon /></Slot>
            <Slot $w={34}><Minus size={14} color="#555" /></Slot>
            <ZoomTrack><ZoomThumb /></ZoomTrack>
            <Slot $w={32} $s={22}>+</Slot>
            <Spacer $w={11} />
            <StatusText $w={60}>120%</StatusText>
          </StatusBar>
        </Frame>

        <BlueLine />
        <Taskbar>
          <StartBtn><FaWindows /></StartBtn>
          <SearchBox>
            <Search size={30} strokeWidth={1.5} style={{ transform: 'scaleX(-1)' }} />
            Scrivi qui per eseguire la ricerca
          </SearchBox>
          <CortanaSlot><Ring /></CortanaSlot>
          <AppSlot><ExplorerIcon /></AppSlot>
          <AppSlot><ChromeIcon /></AppSlot>
          <AppSlot><EdgeIcon /></AppSlot>
          <AppSlot><GloveIcon /></AppSlot>
          <AppSlot><SnipIcon /></AppSlot>
          <AppSlot $on><OfficeIcon light="#41a5ee" mid="#2b7cd3" dark="#185abd" box="#1a5dbf" letter="W" /></AppSlot>
          <AppSlot><OfficeIcon light="#33c481" mid="#21a366" dark="#107c41" box="#185c37" letter="X" /></AppSlot>
          <AppSlot><NoteIcon /></AppSlot>
          <AppSlot><LayersIcon /></AppSlot>
          <AppSlot><HexBIcon /></AppSlot>
          <AppSlot><WhatsappIcon /></AppSlot>
          <AppSlot><LastIcon /></AppSlot>
        </Taskbar>
      </Win>
    </Desktop>
  );
}
